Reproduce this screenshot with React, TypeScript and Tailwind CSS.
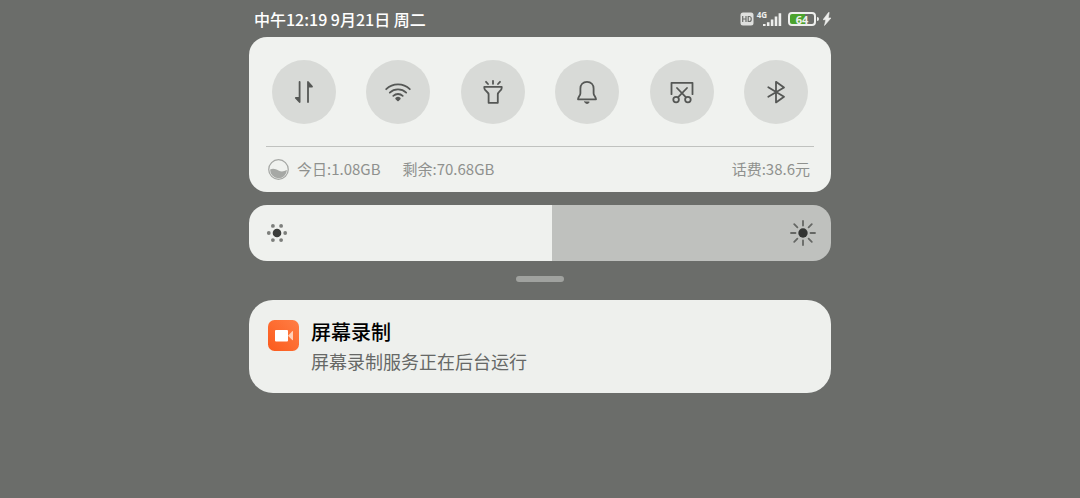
import React, { useState } from 'react';

interface Toggle {
  id: string;
  label: string;
  icon: React.ReactNode;
}

const toggles: Toggle[] = [
  {
    id: 'data',
    label: '移动数据',
    icon: (
      <>
        <path d="M11.6 6V26L7.800 22H11.600" fill="currentColor" />
        <path d="M20 26V6L24 10.500H20" fill="currentColor" />
      </>
    ),
  },
  {
    id: 'wifi',
    label: 'WLAN',
    icon: (
      <>
        <path d="M4.2 13.2a17 17 0 0 1 23.6 0" />
        <path d="M7.8 16.6a12 12 0 0 1 16.4 0" />
        <path d="M11.3 19.8a7 7 0 0 1 9.4 0" />
        <path d="M16 24.3l-1.8-1.8a2.6 2.6 0 0 1 3.6 0z" fill="currentColor" />
      </>
    ),
  },
  {
    id: 'torch',
    label: '手电筒',
    icon: (
      <>
        <path d="M7.3 10.8h17.4v1.2c0 3-3.9 3.4-3.9 6.5v8.3h-9.2v-8.3c0-3.1-4.3-3.5-4.3-6.5z" />
        <path d="M16 4.8v3M9 5.8l2 2.2M23 5.8l-2 2.2" />
      </>
    ),
  },
  {
    id: 'ring',
    label: '响铃',
    icon: (
      <>
        <path d="M16 5.8c-4.2 0-6.6 3-6.6 6.6v4.8c0 2.4-2.4 3.8-2.4 6.1h18c0-2.3-2.4-3.7-2.4-6.1v-4.8c0-3.6-2.4-6.6-6.6-6.6z" />
        <path d="M13.8 25.9h4.4a2.3 2.3 0 0 1-4.4 0z" fill="currentColor" strokeWidth="0.8" />
      </>
    ),
  },
  {
    id: 'screenshot',
    label: '截屏',
    icon: (
      <>
        <path d="M5.5 18.2V6.8h21v11.4" />
        <path d="M11 12l8.8 9.2M21 12l-8.8 9.2" />
        <circle cx="10.1" cy="23.6" r="2.8" />
        <circle cx="21.9" cy="23.6" r="2.8" />
      </>
    ),
  },
  {
    id: 'bluetooth',
    label: '蓝牙',
    icon: <path d="M8.3 11.2L24 20.8l-8 5.6V5.8l8 5.6L8.3 20.8" />,
  },
];

const StatusIcons: React.FC = () => (
  <div className="flex items-center text-[#eeefed]">
    <svg className="h-3.5 w-3.5" viewBox="0 0 14 14" aria-label="HD">
      <rect x="0.5" y="0.5" width="13" height="13" rx="2.5" fill="#dfe0de" />
      <path d="M2.7 4v6M6 4v6M2.7 7H6M8.2 4.5v5h1a2 2 0 0 0 2-2v-1a2 2 0 0 0-2-2z" fill="none" stroke="#6b6d6a" strokeWidth="1.2" />
    </svg>
    <div className="ml-[3px] flex h-4 items-start">
      <span className="font-['Open_Sans',sans-serif] text-[8px] leading-[7px] font-bold">4G</span>
      <svg className="-ml-[5px] h-4 w-5" viewBox="0 0 20 16" aria-hidden="true">
        <path d="M1 13h2.6v2H1zM4.9 11.2h2.6V15H4.9zM8.8 8.4h2.6V15H8.8zM12.7 5.4h2.6V15h-2.6zM16.6 2.2h2.6V15h-2.6z" fill="currentColor" />
      </svg>
    </div>
    <div className="ml-1.5 flex items-center">
      <div className="flex h-3.5 w-7 items-center justify-center rounded border-2 border-current bg-[linear-gradient(90deg,#4ba32d_64%,transparent_64%)] font-['Open_Sans',sans-serif] text-[11px] leading-none font-bold">
        64
      </div>
      <div className="ml-px h-1 w-0.5 rounded-r-sm bg-current" />
    </div>
    <svg className="ml-1 h-3.5 w-2" viewBox="0 0 8 14" aria-hidden="true">
      <path d="M5.500 0.500L0 7.700h2.800L1.500 13.500l6.500-7.500H5.300L6.200 0.500z" fill="currentColor" stroke="currentColor" strokeWidth="0.600" />
    </svg>
  </div>
);

export default function App() {
  const [active, setActive] = useState<string[]>([]);
  const [brightness, setBrightness] = useState(52);

  const toggle = (id: string) =>
    setActive((prev) => (prev.includes(id) ? prev.filter((x) => x !== id) : [...prev, id]));

  return (
    <div className="min-h-screen bg-[#6b6d6a] font-['Noto_Sans_CJK_SC',sans-serif]">
      <div className="mx-auto w-full max-w-[582px] pb-4">
        {/* 状态栏 */}
        <header className="flex items-center justify-between pt-[7px] pb-1.5 pl-[5px]">
          <span className="text-base leading-6 font-medium text-white">中午12:19 9月21日 周二</span>
          <StatusIcons />
        </header>

        {/* 快捷开关 */}
        <section className="rounded-[18px] bg-[#f0f2ef] px-[17px] pt-[23px]">
          <div className="flex justify-between px-1.5">
            {toggles.map((item) => (
              <button
                key={item.id}
                type="button"
                aria-label={item.label}
                aria-pressed={active.includes(item.id)}
                onClick={() => toggle(item.id)}
                className={`flex h-16 w-16 items-center justify-center rounded-full ${
                  active.includes(item.id) ? 'bg-[#2f7cf6] text-white' : 'bg-[#d8dad7] text-[#555755]'
                }`}
              >
                <svg
                  className="h-8 w-8"
                  viewBox="0 0 32 32"
                  fill="none"
                  stroke="currentColor"
                  strokeWidth="1.8"
                  strokeLinecap="round"
                  strokeLinejoin="round"
                >
                  {item.icon}
                </svg>
              </button>
            ))}
          </div>

          <div className="mt-[22px] flex items-center border-t border-[#c0c2bf] px-0.5 pt-2.5 pb-[11px] text-[15px] leading-6 text-[#8f918e]">
            <svg className="mr-2 h-[21px] w-[21px]" viewBox="0 0 20 20" aria-hidden="true">
              <circle cx="10" cy="10" r="9.3" fill="none" stroke="#a6a8a5" strokeWidth="1.2" />
              <path d="M2 10c3-1.5 5.200-.5 8 1s5 1 8-.5a8 8 0 0 1-16-.5z" fill="#a6a8a5" />
            </svg>
            <span>今日:1.08GB</span>
            <span className="ml-[22px]">剩余:70.68GB</span>
            <span className="ml-auto pr-0.5">话费:38.6元</span>
          </div>
        </section>

        {/* 亮度 */}
        <div className="relative mt-[13px] h-14 overflow-hidden rounded-[18px]">
          <input
            type="range"
            min={0}
            max={100}
            value={brightness}
            aria-label="亮度"
            onChange={(e) => setBrightness(Number(e.target.value))}
            className="block h-full w-full appearance-none [&::-webkit-slider-thumb]:h-14 [&::-webkit-slider-thumb]:w-px [&::-webkit-slider-thumb]:appearance-none"
            style={{ background: `linear-gradient(90deg, #eff1ee ${brightness}%, #bfc1be ${brightness}%)` }}
          />
          <svg className="pointer-events-none absolute top-4 left-4 h-6 w-6" viewBox="0 0 24 24" aria-hidden="true">
            <circle cx="12" cy="12" r="4.3" fill="#3c3e3c" />
            <g fill="#7d7f7c">
              <circle cx="3.8" cy="12" r="1.9" />
              <circle cx="20.2" cy="12" r="1.9" />
              <circle cx="7.9" cy="4.9" r="1.9" />
              <circle cx="16.1" cy="4.9" r="1.9" />
              <circle cx="7.9" cy="19.1" r="1.9" />
              <circle cx="16.1" cy="19.1" r="1.9" />
            </g>
          </svg>
          <svg className="pointer-events-none absolute top-3.5 right-3.5 h-7 w-7" viewBox="0 0 28 28" aria-hidden="true">
            <circle cx="14" cy="14" r="4.7" fill="#333533" />
            <path
              d="M14 2v4.5M14 21.5V26M2 14h4.5M21.5 14H26M5.2 5.2l3.2 3.2M19.6 19.6l3.2 3.2M22.8 5.2l-3.2 3.2M8.4 19.6l-3.2 3.2"
              stroke="#656764"
              strokeWidth="1.8"
              strokeLinecap="round"
            />
          </svg>
        </div>

        <div className="mx-auto mt-[15px] h-1.5 w-12 rounded-full bg-[#a0a29f]" />

        {/* 通知 */}
        <article className="mt-[18px] flex items-start gap-3 rounded-3xl bg-[#eef0ed] px-[19px] pt-5 pb-[18px]">
          <svg className="h-[31px] w-[31px] shrink-0" viewBox="0 0 31 31" aria-hidden="true">
            <defs>
              <linearGradient id="recorder" x1="1" y1="0" x2="0" y2="1">
                <stop offset="0" stopColor="#ff7e45" />
                <stop offset="1" stopColor="#fb5a1c" />
              </linearGradient>
            </defs>
            <rect width="31" height="31" rx="6.5" fill="url(#recorder)" />
            <rect x="7" y="10" width="13" height="11.5" rx="1" fill="#fff" />
            <path d="M20 15.7l4.2-4.400q.8-.6.8.5v7.800q0 1.100-.8.5z" fill="#ffd0b8" />
          </svg>
          <div>
            <h2 className="text-xl leading-6 font-medium text-black">屏幕录制</h2>
            <p className="mt-[3px] text-lg leading-7 text-[#666866]">屏幕录制服务正在后台运行</p>
          </div>
        </article>
      </div>
    </div>
  );
}
